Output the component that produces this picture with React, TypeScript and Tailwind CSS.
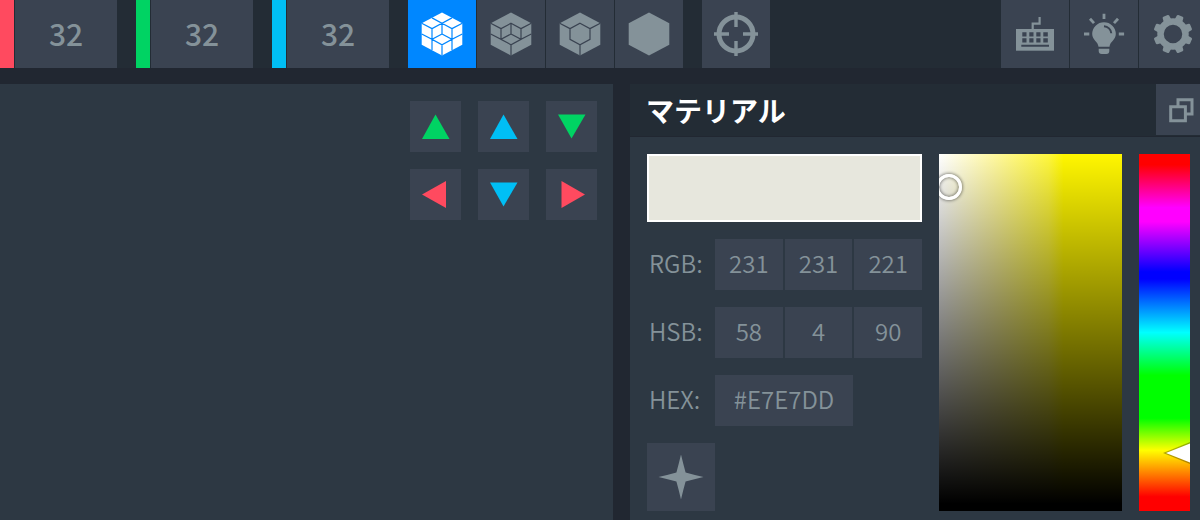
import { useState } from "react";
import type { ReactNode } from "react";

const axes = [
  { label: "Size X", color: "bg-[#ff4a5f]" },
  { label: "Size Y", color: "bg-[#00d363]" },
  { label: "Size Z", color: "bg-[#00bff5]" },
];

const arrows = [
  { label: "Y up", color: "fill-[#00d363]", points: "25.5,13.5 39.5,38 12,38" },
  { label: "Z up", color: "fill-[#00bff5]", points: "25.5,13.5 39.5,38 12,38" },
  { label: "Y down", color: "fill-[#00d363]", points: "25.5,37.5 12,13.5 39.5,13.5" },
  { label: "X left", color: "fill-[#ff4a5f]", points: "12,25.5 36,12 36,39" },
  { label: "Z down", color: "fill-[#00bff5]", points: "25.5,37.5 12,13.5 39.5,13.5" },
  { label: "X right", color: "fill-[#ff4a5f]", points: "39,25.5 15.5,12 15.5,39" },
];

const HEXAGON = "M34 12.5L54.3 23.3V44.7L34 55.5L13.7 44.7V23.3Z";
const OUTER_EDGES = "M13.7 23.3L24 28.6M54.3 23.3L44 28.6M34 44.7V55.5";
const NOTCH = "M34 23.3L44 28.6V39.4L34 44.7L24 39.4V28.6Z";
const FLOOR = "M34 34V23.3M34 34L24 39.4L13.7 34M34 34L44 39.4L54.3 34";
const SPLITS = "M24 39.4V50.1M44 39.4V50.1M24 17.9L34 23.3L44 17.9";

const modes = [
  { label: "Voxel", lines: OUTER_EDGES + NOTCH + FLOOR + SPLITS },
  { label: "Face", lines: OUTER_EDGES + NOTCH + FLOOR },
  { label: "Box", lines: OUTER_EDGES + NOTCH },
  { label: "Solid", lines: "" },
];

function Icon({ children, box = "0 0 68 68" }: { children: ReactNode; box?: string }) {
  return (
    <svg viewBox={box} className="block size-full" fill="#849299" stroke="none" aria-hidden="true">
      {children}
    </svg>
  );
}

interface ToolButtonProps {
  label: string;
  active?: boolean;
  onClick?: () => void;
  children: ReactNode;
}

function ToolButton({ label, active = false, onClick, children }: ToolButtonProps) {
  return (
    <button
      aria-label={label}
      onClick={onClick}
      className={`size-[68px] shrink-0 ${active ? "bg-[#0087ff]" : "bg-[#3a4351]"}`}
    >
      {children}
    </button>
  );
}

function ValueRow({ name, parts, values }: { name: string; parts: string[]; values: string[] }) {
  return (
    <div className="flex h-[51px] items-center">
      <span className="w-[68px] shrink-0 pb-1 pl-0.5 text-2xl font-[350]">{name}:</span>
      <div className="flex h-full flex-1 gap-0.5">
        {parts.map((part, i) => (
          <input
            key={part}
            aria-label={part}
            defaultValue={values[i]}
            className="h-full w-0 min-w-0 flex-1 bg-[#3a4351] pb-1 text-center text-2xl font-[350] outline-none"
          />
        ))}
      </div>
    </div>
  );
}

export default function App() {
  const [mode, setMode] = useState(0);

  return (
    <div className="min-h-screen overflow-hidden bg-[#212731] font-['Noto_Sans_CJK_JP',sans-serif] text-[#849299]">
      <div className="flex min-h-screen w-[calc(100%+7px)] flex-col gap-4">
        <header className="flex h-[68px] gap-[19px] bg-[#232c35]">
          {axes.map((axis) => (
            <label key={axis.label} className="flex gap-px">
              <span className={`w-3.5 ${axis.color}`} />
              <input
                aria-label={axis.label}
                defaultValue="32"
                className="h-full w-[102px] bg-[#3a4351] pb-0.5 text-center text-3xl font-medium outline-none"
              />
            </label>
          ))}
          <div className="flex gap-px">
            {modes.map((m, i) => (
              <ToolButton key={m.label} label={m.label} active={i === mode} onClick={() => setMode(i)}>
                <Icon>
                  <path d={HEXAGON} className={i === mode ? "fill-white" : "fill-[#849299]"} />
                  <path
                    d={m.lines}
                    fill="none"
                    strokeWidth="1.2"
                    className={i === mode ? "stroke-[#0087ff]" : "stroke-[#3a4351]"}
                  />
                </Icon>
              </ToolButton>
            ))}
          </div>
          <ToolButton label="Focus">
            <Icon>
              <circle cx="34" cy="34" r="17" fill="none" stroke="#849299" strokeWidth="5" />
              <path d="M34 12V27M34 41V56M12 34H27M41 34H56" stroke="#849299" strokeWidth="3.4" />
            </Icon>
          </ToolButton>
          <div className="ml-auto flex gap-px">
            <ToolButton label="Keyboard shortcuts">
              <Icon>
                <path d="M31.7 30V23.7H38.6V17" fill="none" stroke="#849299" strokeWidth="2.2" />
                <rect x="15" y="29" width="38" height="21.7" />
                <path
                  d="M21.3 32.3h4.2v4.2h-4.2zM28.3 32.3h4.2v4.2h-4.2zM35.3 32.3h4.2v4.2h-4.2zM42.3 32.3h4.5v4.2h-4.5zM21.3 38.2h4.2v4.2h-4.2zM28.3 38.2h4.2v4.2h-4.2zM35.3 38.2h4.2v4.2h-4.2zM42.3 38.2h4.5v4.2h-4.5zM20.3 44.8h27.7v1.9h-27.7z"
                  fill="#3a4351"
                />
              </Icon>
            </ToolButton>
            <ToolButton label="Lighting">
              <Icon>
                <path d="M34 22.2a11.8 11.8 0 0 1 11.8 11.8c0 6-5.8 7.5-6.3 12.7h-11c-.5-5.2-6.3-6.7-6.3-12.7a11.8 11.8 0 0 1 11.8-11.8z" />
                <path d="M28.7 48.7h10.6v2.3q0 3-3 3h-4.6q-3 0-3-3z" />
                <path
                  d="M34 13.7V19M14 34h5.3M48.8 34h5.3M20 18.8l4 4.3M48 18.8l-4 4.3"
                  stroke="#849299"
                  strokeWidth="2.8"
                />
                <path d="M34 26.3a7.5 7.5 0 0 1 7.3 7" fill="none" stroke="#3a4351" strokeWidth="2" />
              </Icon>
            </ToolButton>
            <ToolButton label="Settings">
              <Icon>
                <circle cx="34" cy="34" r="12.5" fill="none" stroke="#849299" strokeWidth="6.5" />
                {[22.5, 67.5, 112.5, 157.5, 202.5, 247.5, 292.5, 337.5].map((a) => (
                  <path
                    key={a}
                    d="M29.8 21L30.5 15.5Q30.7 14.5 31.7 14.5H36.3Q37.3 14.5 37.5 15.5L38.2 21Z"
                    transform={`rotate(${a} 34 34)`}
                  />
                ))}
              </Icon>
            </ToolButton>
          </div>
        </header>

        <main className="flex flex-1 gap-[17px]">
          <section aria-label="Viewport" className="flex flex-1 items-start justify-end bg-[#2d3843] p-4 pt-[17px]">
            <div className="grid grid-cols-3 gap-[17px]">
              {arrows.map((a) => (
                <button key={a.label} aria-label={a.label} className="size-[51px] bg-[#3a4351]">
                  <Icon box="0 0 51 51">
                    <polygon points={a.points} className={a.color} />
                  </Icon>
                </button>
              ))}
            </div>
          </section>

          <aside className="flex w-[577px] shrink-0 flex-col bg-[#2d3843]">
            <div className="flex h-[53px] items-start justify-between border-b border-[#212731] bg-[#232c35]">
              <h2 className="pl-4 text-[28px] leading-[52px] font-bold text-white">マテリアル</h2>
              <button aria-label="Detach panel" className="size-[51px] bg-[#3a4351]">
                <Icon box="0 0 51 51">
                  <path
                    d="M14.7 22.7h14.7v14h-14.7zM22 22.7v-7h14v14.3h-6.6"
                    fill="none"
                    stroke="#849299"
                    strokeWidth="3"
                  />
                </Icon>
              </button>
            </div>
            <div className="flex gap-[17px] px-[17px] pt-[17px] pb-2">
              <div className="flex flex-1 flex-col gap-[17px]">
                <button aria-label="Current color" className="h-[68px] w-full border-2 border-white bg-[#e7e7dd]" />
                <ValueRow name="RGB" parts={["Red", "Green", "Blue"]} values={["231", "231", "221"]} />
                <ValueRow name="HSB" parts={["Hue", "Saturation", "Brightness"]} values={["58", "4", "90"]} />
                <label className="flex h-[51px] items-center">
                  <span className="w-[68px] shrink-0 pb-1 pl-0.5 text-2xl font-[350]">HEX:</span>
                  <input
                    defaultValue="#E7E7DD"
                    className="h-full w-[138px] bg-[#3a4351] pb-1 text-center text-2xl font-[350] outline-none"
                  />
                </label>
                <ToolButton label="Emission">
                  <Icon>
                    <path d="M34 11.5Q36.5 22 38.6 29.4Q46 31.5 56.500 34Q46 36.5 38.6 38.600Q36.5 46 34 56.500Q31.5 46 29.4 38.6Q22 36.5 11.5 34Q22 31.5 29.4 29.4Q31.5 22 34 11.5Z" />
                  </Icon>
                </ToolButton>
              </div>
              <div
                aria-label="Saturation and brightness"
                className="relative w-[183px] overflow-hidden bg-[linear-gradient(to_bottom,transparent,#000_98%),linear-gradient(to_right,#fff,#fff8a0_30%,#fff73c_60%,#fff600_68%)]"
              >
                <span className="absolute top-[33px] left-2.5 size-[26px] -translate-x-1/2 -translate-y-1/2 rounded-full border-[3px] border-white shadow-[0_0_3px_1px_#00000066,inset_0_0_3px_1px_#00000066]" />
              </div>
              <div className="relative w-[51px] bg-[linear-gradient(to_bottom,#f00_3%,#f0f_15%,#f0f_19%,#00f_33%,#00f_35%,#0ff_50%,#0f0_62%,#0f0_74%,#ff0_83%,#f00_96%)]">
                <input
                  type="range"
                  aria-label="Hue"
                  min="0"
                  max="360"
                  defaultValue="58"
                  className="absolute inset-0 size-full opacity-0"
                />
                <svg
                  viewBox="0 0 28 24"
                  className="pointer-events-none absolute right-0 bottom-[46px] w-7"
                  aria-hidden="true"
                >
                  <path d="M1 12L28 1V23Z" className="fill-black/30" />
                  <path d="M4 12L28 2.5V21.5Z" className="fill-white" />
                </svg>
              </div>
            </div>
          </aside>
        </main>
      </div>
    </div>
  );
}
